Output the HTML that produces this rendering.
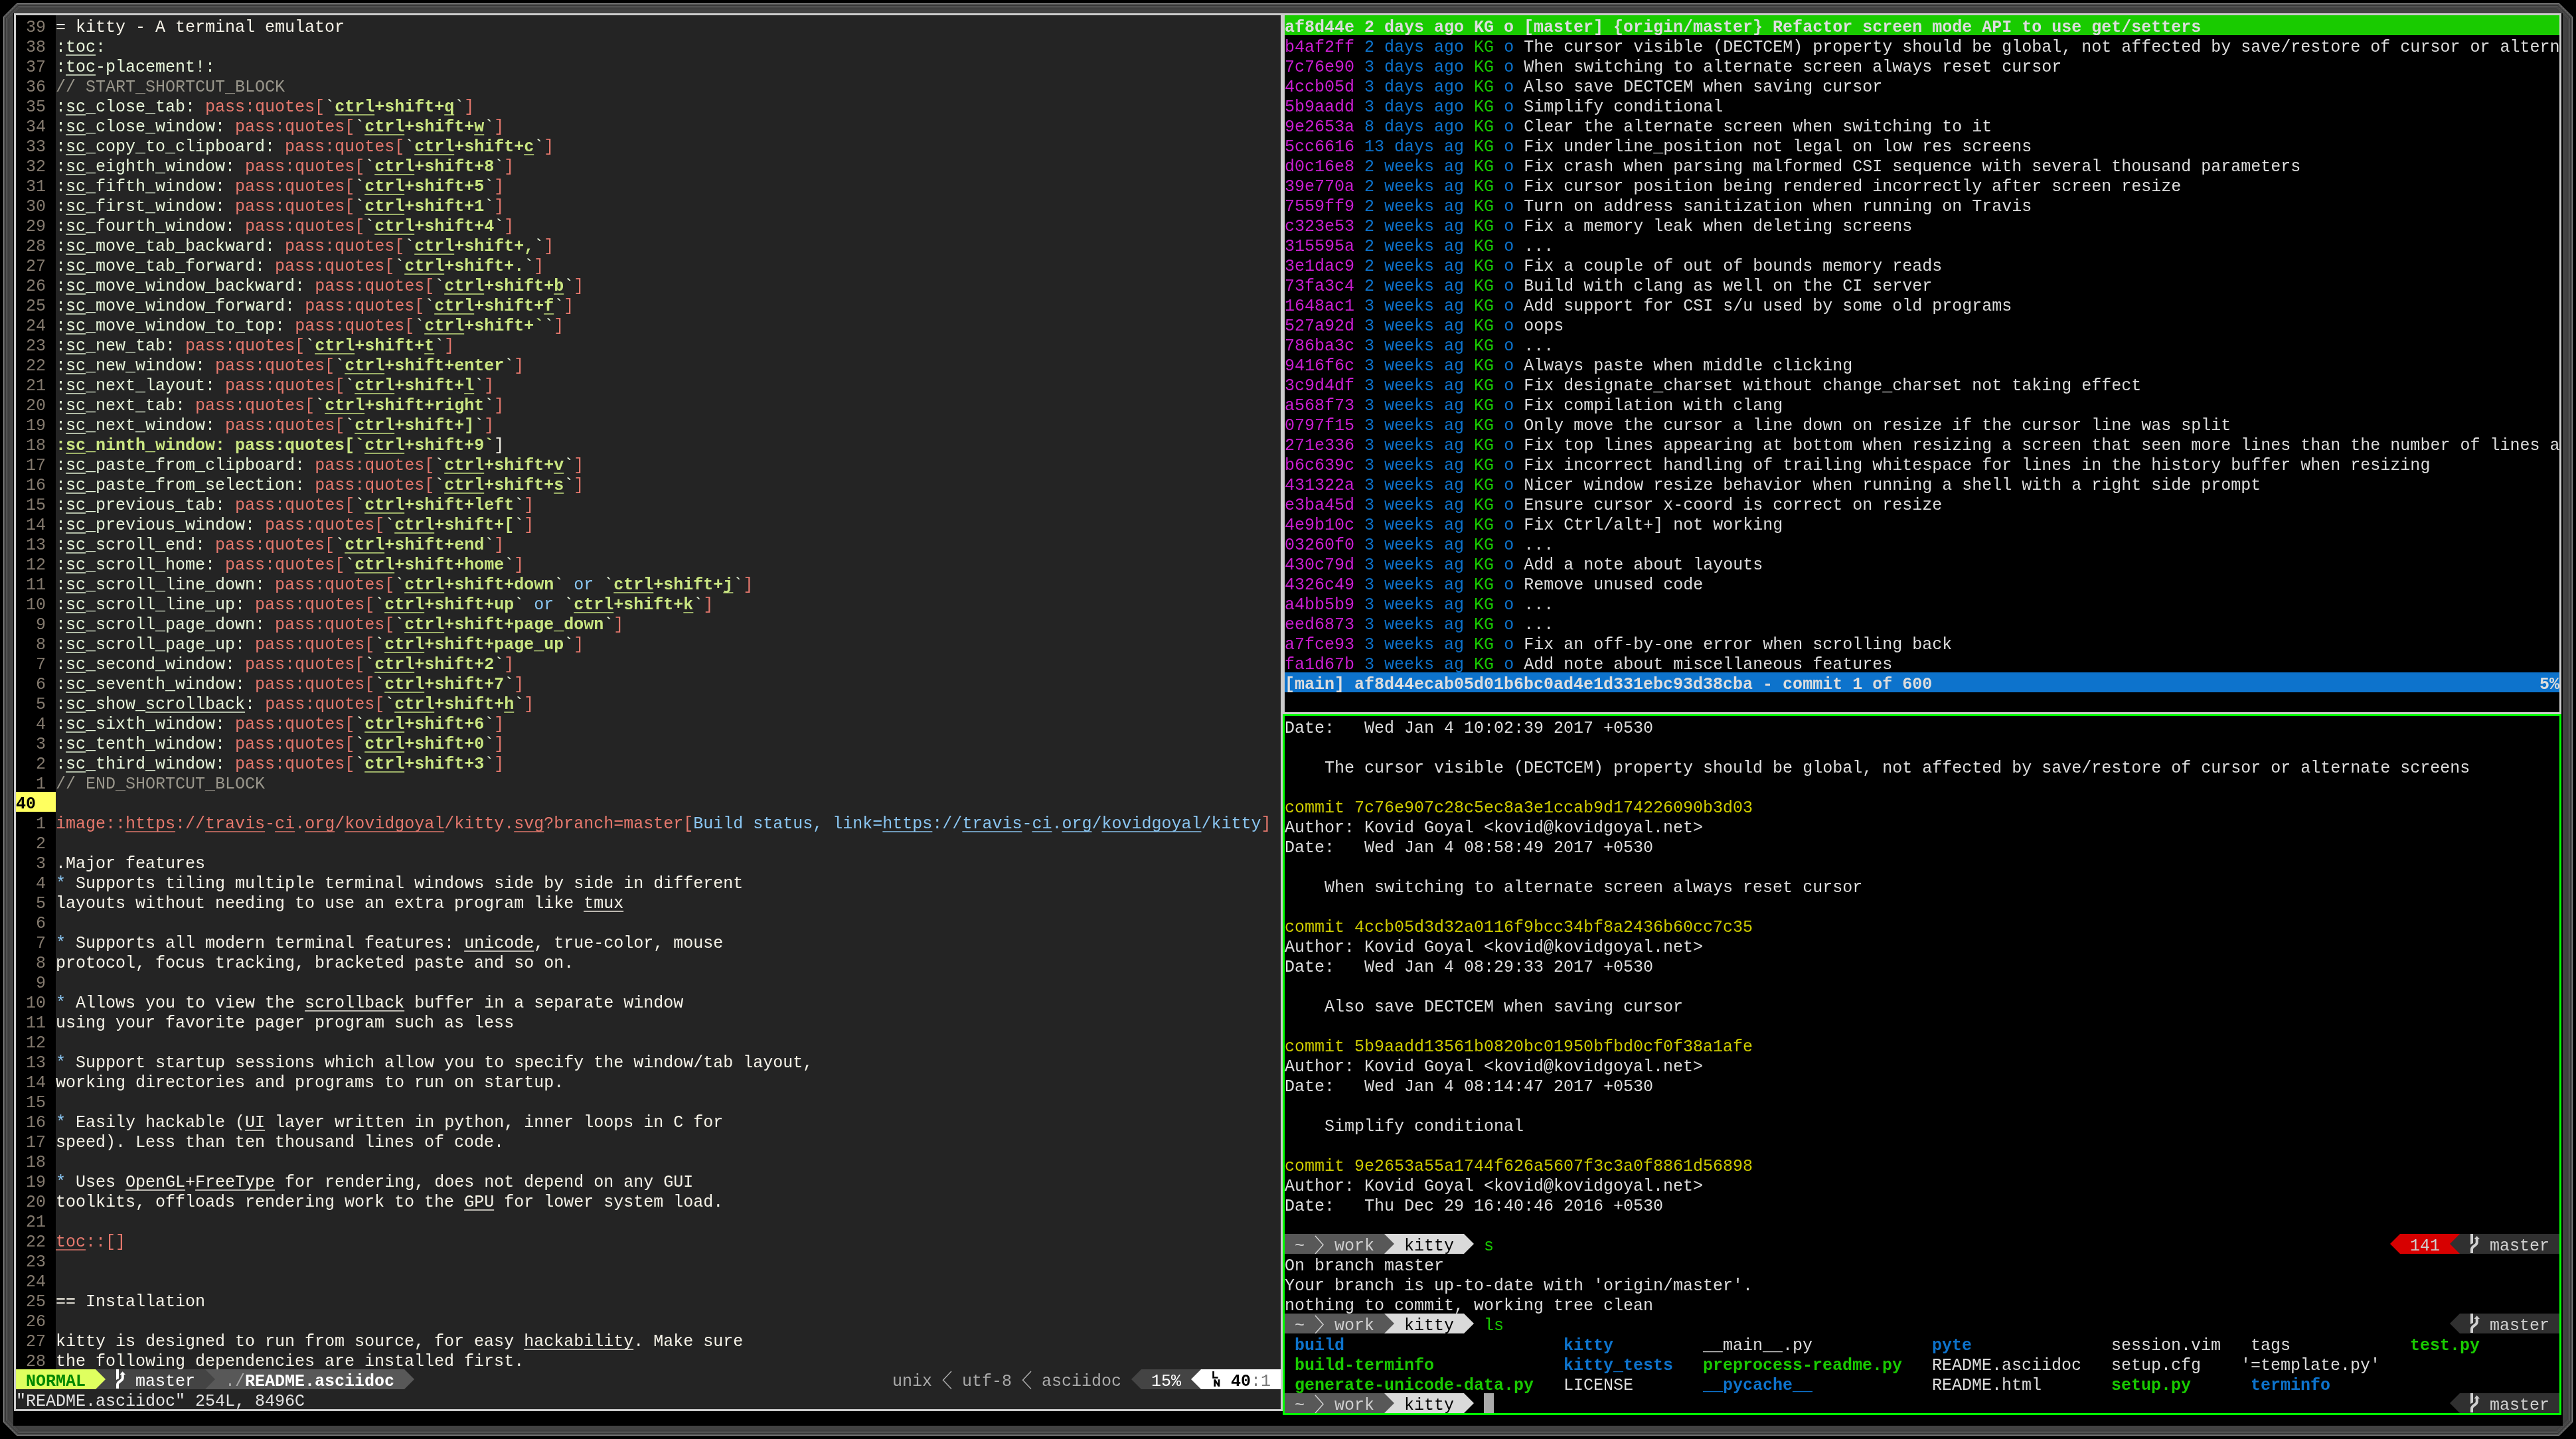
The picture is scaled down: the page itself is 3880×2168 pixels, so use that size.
<!DOCTYPE html><html><head><meta charset="utf-8"><style>
*{margin:0;padding:0}
html,body{width:3880px;height:2168px;overflow:hidden;background:#000}
body{position:relative;font-family:"Liberation Mono",monospace;font-size:25px;line-height:30px;white-space:pre;font-kerning:none;font-variant-ligatures:none}
.p{position:absolute;overflow:hidden;will-change:transform}
.r{position:absolute;left:0;height:30px;line-height:30px}
.t{position:absolute;left:0;height:30px;line-height:30px;top:4px}
.b{position:absolute;height:30px}
.g{position:absolute;top:0}
b{font-weight:bold}
u{text-decoration:underline;text-decoration-thickness:2px;text-underline-offset:4px;text-decoration-color:color-mix(in srgb,currentColor 72%,transparent);text-decoration-skip-ink:none}
</style></head><body><svg style="position:absolute;left:0;top:0" width="3880" height="2168" viewBox="0 0 3880 2168"><path fill-rule="evenodd" fill="#424242" d="M25.0,5 H3855.0 L3875,25.0 V2143.0 L3855.0,2163 H25.0 L5,2143.0 V25.0 Z M20,20 V2148 H3860 V20 Z"/><path fill="none" stroke="#888888" stroke-width="1" d="M25.29,5.5 H3854.71 L3874.5,25.29 V2142.71 L3854.71,2162.5 H25.29 L5.5,2142.71 V25.29 Z"/><path fill="none" stroke="#555555" stroke-width="2" d="M26.16,7 H3853.84 L3873,26.16 V2141.84 L3853.84,2161 H26.16 L7,2141.84 V26.16 Z"/><path fill="none" stroke="#333333" stroke-width="1" d="M27.03,8.5 H3852.97 L3871.5,27.03 V2140.97 L3852.97,2159.5 H27.03 L8.5,2140.97 V27.03 Z"/><path fill="none" stroke="#555555" stroke-width="1" d="M27.61,9.5 H3852.39 L3870.5,27.61 V2140.39 L3852.39,2158.5 H27.61 L9.5,2140.39 V27.61 Z"/><path fill="none" stroke="#474747" stroke-width="3" d="M28.77,11.5 H3851.23 L3868.5,28.77 V2139.23 L3851.23,2156.5 H28.77 L11.5,2139.23 V28.77 Z"/><path fill="none" stroke="#393939" stroke-width="1" d="M29.64,13 H3850.36 L3867,29.64 V2138.36 L3850.36,2155 H29.64 L13,2138.36 V29.64 Z"/><rect x="20" y="20" width="3840" height="2128" fill="#000"/></svg><div style="position:absolute;left:21px;top:20px;width:1911px;height:3px;background:#cccccc"></div><div style="position:absolute;left:21px;top:20px;width:3px;height:2106px;background:#cccccc"></div><div style="position:absolute;left:21px;top:2123px;width:1911px;height:3px;background:#cccccc"></div><div style="position:absolute;left:1929px;top:20px;width:3px;height:2106px;background:#cccccc"></div><div style="position:absolute;left:1932px;top:20px;width:1926px;height:3px;background:#cccccc"></div><div style="position:absolute;left:1932px;top:20px;width:3px;height:1056px;background:#cccccc"></div><div style="position:absolute;left:3855px;top:20px;width:3px;height:1056px;background:#cccccc"></div><div style="position:absolute;left:1932px;top:1073px;width:1926px;height:3px;background:#cccccc"></div><div style="position:absolute;left:1932px;top:1076px;width:1926px;height:3px;background:#00ff00"></div><div style="position:absolute;left:1932px;top:1076px;width:3px;height:1056px;background:#00ff00"></div><div style="position:absolute;left:3855px;top:1076px;width:3px;height:1056px;background:#00ff00"></div><div style="position:absolute;left:1932px;top:2129px;width:1926px;height:3px;background:#00ff00"></div><div class="p" style="left:24px;top:23px;width:1905px;height:2100px;background:#242424;color:#f6f3e8"><div class="b" style="left:0px;top:0px;width:60px;height:2040px;background:#000"></div><div class="t" style="top:4px;left:0px"><span style="color:#857b6f"> 39 </span><span style="color:#f6f3e8">= kitty - A terminal emulator</span></div><div class="t" style="top:34px;left:0px"><span style="color:#857b6f"> 38 </span><span style="color:#e7f6da">:</span><span style="color:#e7f6da"><u>toc</u></span><span style="color:#e7f6da">:</span></div><div class="t" style="top:64px;left:0px"><span style="color:#857b6f"> 37 </span><span style="color:#e7f6da">:</span><span style="color:#e7f6da"><u>toc</u></span><span style="color:#e7f6da">-placement!:</span></div><div class="t" style="top:94px;left:0px"><span style="color:#857b6f"> 36 </span><span style="color:#99968b">// START_SHORTCUT_BLOCK</span></div><div class="t" style="top:124px;left:0px"><span style="color:#857b6f"> 35 </span><span style="color:#e7f6da">:</span><span style="color:#e7f6da"><u>sc</u></span><span style="color:#e7f6da">_close_tab:</span><span style="color:#f6f3e8"> </span><span style="color:#e5786d">pass:quotes[</span><span style="color:#e7f6da">`</span><span style="color:#cae682"><b><u>ctrl</u></b></span><span style="color:#cae682"><b>+shift+</b></span><span style="color:#cae682"><b><u>q</u></b></span><span style="color:#e7f6da">`</span><span style="color:#e5786d">]</span></div><div class="t" style="top:154px;left:0px"><span style="color:#857b6f"> 34 </span><span style="color:#e7f6da">:</span><span style="color:#e7f6da"><u>sc</u></span><span style="color:#e7f6da">_close_window:</span><span style="color:#f6f3e8"> </span><span style="color:#e5786d">pass:quotes[</span><span style="color:#e7f6da">`</span><span style="color:#cae682"><b><u>ctrl</u></b></span><span style="color:#cae682"><b>+shift+</b></span><span style="color:#cae682"><b><u>w</u></b></span><span style="color:#e7f6da">`</span><span style="color:#e5786d">]</span></div><div class="t" style="top:184px;left:0px"><span style="color:#857b6f"> 33 </span><span style="color:#e7f6da">:</span><span style="color:#e7f6da"><u>sc</u></span><span style="color:#e7f6da">_copy_to_clipboard:</span><span style="color:#f6f3e8"> </span><span style="color:#e5786d">pass:quotes[</span><span style="color:#e7f6da">`</span><span style="color:#cae682"><b><u>ctrl</u></b></span><span style="color:#cae682"><b>+shift+</b></span><span style="color:#cae682"><b><u>c</u></b></span><span style="color:#e7f6da">`</span><span style="color:#e5786d">]</span></div><div class="t" style="top:214px;left:0px"><span style="color:#857b6f"> 32 </span><span style="color:#e7f6da">:</span><span style="color:#e7f6da"><u>sc</u></span><span style="color:#e7f6da">_eighth_window:</span><span style="color:#f6f3e8"> </span><span style="color:#e5786d">pass:quotes[</span><span style="color:#e7f6da">`</span><span style="color:#cae682"><b><u>ctrl</u></b></span><span style="color:#cae682"><b>+shift+</b></span><span style="color:#cae682"><b>8</b></span><span style="color:#e7f6da">`</span><span style="color:#e5786d">]</span></div><div class="t" style="top:244px;left:0px"><span style="color:#857b6f"> 31 </span><span style="color:#e7f6da">:</span><span style="color:#e7f6da"><u>sc</u></span><span style="color:#e7f6da">_fifth_window:</span><span style="color:#f6f3e8"> </span><span style="color:#e5786d">pass:quotes[</span><span style="color:#e7f6da">`</span><span style="color:#cae682"><b><u>ctrl</u></b></span><span style="color:#cae682"><b>+shift+</b></span><span style="color:#cae682"><b>5</b></span><span style="color:#e7f6da">`</span><span style="color:#e5786d">]</span></div><div class="t" style="top:274px;left:0px"><span style="color:#857b6f"> 30 </span><span style="color:#e7f6da">:</span><span style="color:#e7f6da"><u>sc</u></span><span style="color:#e7f6da">_first_window:</span><span style="color:#f6f3e8"> </span><span style="color:#e5786d">pass:quotes[</span><span style="color:#e7f6da">`</span><span style="color:#cae682"><b><u>ctrl</u></b></span><span style="color:#cae682"><b>+shift+</b></span><span style="color:#cae682"><b>1</b></span><span style="color:#e7f6da">`</span><span style="color:#e5786d">]</span></div><div class="t" style="top:304px;left:0px"><span style="color:#857b6f"> 29 </span><span style="color:#e7f6da">:</span><span style="color:#e7f6da"><u>sc</u></span><span style="color:#e7f6da">_fourth_window:</span><span style="color:#f6f3e8"> </span><span style="color:#e5786d">pass:quotes[</span><span style="color:#e7f6da">`</span><span style="color:#cae682"><b><u>ctrl</u></b></span><span style="color:#cae682"><b>+shift+</b></span><span style="color:#cae682"><b>4</b></span><span style="color:#e7f6da">`</span><span style="color:#e5786d">]</span></div><div class="t" style="top:334px;left:0px"><span style="color:#857b6f"> 28 </span><span style="color:#e7f6da">:</span><span style="color:#e7f6da"><u>sc</u></span><span style="color:#e7f6da">_move_tab_backward:</span><span style="color:#f6f3e8"> </span><span style="color:#e5786d">pass:quotes[</span><span style="color:#e7f6da">`</span><span style="color:#cae682"><b><u>ctrl</u></b></span><span style="color:#cae682"><b>+shift+</b></span><span style="color:#cae682"><b>,</b></span><span style="color:#e7f6da">`</span><span style="color:#e5786d">]</span></div><div class="t" style="top:364px;left:0px"><span style="color:#857b6f"> 27 </span><span style="color:#e7f6da">:</span><span style="color:#e7f6da"><u>sc</u></span><span style="color:#e7f6da">_move_tab_forward:</span><span style="color:#f6f3e8"> </span><span style="color:#e5786d">pass:quotes[</span><span style="color:#e7f6da">`</span><span style="color:#cae682"><b><u>ctrl</u></b></span><span style="color:#cae682"><b>+shift+</b></span><span style="color:#cae682"><b>.</b></span><span style="color:#e7f6da">`</span><span style="color:#e5786d">]</span></div><div class="t" style="top:394px;left:0px"><span style="color:#857b6f"> 26 </span><span style="color:#e7f6da">:</span><span style="color:#e7f6da"><u>sc</u></span><span style="color:#e7f6da">_move_window_backward:</span><span style="color:#f6f3e8"> </span><span style="color:#e5786d">pass:quotes[</span><span style="color:#e7f6da">`</span><span style="color:#cae682"><b><u>ctrl</u></b></span><span style="color:#cae682"><b>+shift+</b></span><span style="color:#cae682"><b><u>b</u></b></span><span style="color:#e7f6da">`</span><span style="color:#e5786d">]</span></div><div class="t" style="top:424px;left:0px"><span style="color:#857b6f"> 25 </span><span style="color:#e7f6da">:</span><span style="color:#e7f6da"><u>sc</u></span><span style="color:#e7f6da">_move_window_forward:</span><span style="color:#f6f3e8"> </span><span style="color:#e5786d">pass:quotes[</span><span style="color:#e7f6da">`</span><span style="color:#cae682"><b><u>ctrl</u></b></span><span style="color:#cae682"><b>+shift+</b></span><span style="color:#cae682"><b><u>f</u></b></span><span style="color:#e7f6da">`</span><span style="color:#e5786d">]</span></div><div class="t" style="top:454px;left:0px"><span style="color:#857b6f"> 24 </span><span style="color:#e7f6da">:</span><span style="color:#e7f6da"><u>sc</u></span><span style="color:#e7f6da">_move_window_to_top:</span><span style="color:#f6f3e8"> </span><span style="color:#e5786d">pass:quotes[</span><span style="color:#e7f6da">`</span><span style="color:#cae682"><b><u>ctrl</u></b></span><span style="color:#cae682"><b>+shift+</b></span><span style="color:#cae682"><b>`</b></span><span style="color:#e7f6da">`</span><span style="color:#e5786d">]</span></div><div class="t" style="top:484px;left:0px"><span style="color:#857b6f"> 23 </span><span style="color:#e7f6da">:</span><span style="color:#e7f6da"><u>sc</u></span><span style="color:#e7f6da">_new_tab:</span><span style="color:#f6f3e8"> </span><span style="color:#e5786d">pass:quotes[</span><span style="color:#e7f6da">`</span><span style="color:#cae682"><b><u>ctrl</u></b></span><span style="color:#cae682"><b>+shift+</b></span><span style="color:#cae682"><b><u>t</u></b></span><span style="color:#e7f6da">`</span><span style="color:#e5786d">]</span></div><div class="t" style="top:514px;left:0px"><span style="color:#857b6f"> 22 </span><span style="color:#e7f6da">:</span><span style="color:#e7f6da"><u>sc</u></span><span style="color:#e7f6da">_new_window:</span><span style="color:#f6f3e8"> </span><span style="color:#e5786d">pass:quotes[</span><span style="color:#e7f6da">`</span><span style="color:#cae682"><b><u>ctrl</u></b></span><span style="color:#cae682"><b>+shift+</b></span><span style="color:#cae682"><b>enter</b></span><span style="color:#e7f6da">`</span><span style="color:#e5786d">]</span></div><div class="t" style="top:544px;left:0px"><span style="color:#857b6f"> 21 </span><span style="color:#e7f6da">:</span><span style="color:#e7f6da"><u>sc</u></span><span style="color:#e7f6da">_next_layout:</span><span style="color:#f6f3e8"> </span><span style="color:#e5786d">pass:quotes[</span><span style="color:#e7f6da">`</span><span style="color:#cae682"><b><u>ctrl</u></b></span><span style="color:#cae682"><b>+shift+</b></span><span style="color:#cae682"><b><u>l</u></b></span><span style="color:#e7f6da">`</span><span style="color:#e5786d">]</span></div><div class="t" style="top:574px;left:0px"><span style="color:#857b6f"> 20 </span><span style="color:#e7f6da">:</span><span style="color:#e7f6da"><u>sc</u></span><span style="color:#e7f6da">_next_tab:</span><span style="color:#f6f3e8"> </span><span style="color:#e5786d">pass:quotes[</span><span style="color:#e7f6da">`</span><span style="color:#cae682"><b><u>ctrl</u></b></span><span style="color:#cae682"><b>+shift+</b></span><span style="color:#cae682"><b>right</b></span><span style="color:#e7f6da">`</span><span style="color:#e5786d">]</span></div><div class="t" style="top:604px;left:0px"><span style="color:#857b6f"> 19 </span><span style="color:#e7f6da">:</span><span style="color:#e7f6da"><u>sc</u></span><span style="color:#e7f6da">_next_window:</span><span style="color:#f6f3e8"> </span><span style="color:#e5786d">pass:quotes[</span><span style="color:#e7f6da">`</span><span style="color:#cae682"><b><u>ctrl</u></b></span><span style="color:#cae682"><b>+shift+</b></span><span style="color:#cae682"><b>]</b></span><span style="color:#e7f6da">`</span><span style="color:#e5786d">]</span></div><div class="t" style="top:634px;left:0px"><span style="color:#857b6f"> 18 </span><span style="color:#cae682"><b>:</b></span><span style="color:#cae682"><b><u>sc</u></b></span><span style="color:#cae682"><b>_ninth_window: pass:quotes[</b></span><span style="color:#cae682"><b>`</b></span><span style="color:#cae682"><b><u>ctrl</u></b></span><span style="color:#cae682"><b>+shift+9</b></span><span style="color:#cae682"><b>`</b></span><span style="color:#f6f3e8">]</span></div><div class="t" style="top:664px;left:0px"><span style="color:#857b6f"> 17 </span><span style="color:#e7f6da">:</span><span style="color:#e7f6da"><u>sc</u></span><span style="color:#e7f6da">_paste_from_clipboard:</span><span style="color:#f6f3e8"> </span><span style="color:#e5786d">pass:quotes[</span><span style="color:#e7f6da">`</span><span style="color:#cae682"><b><u>ctrl</u></b></span><span style="color:#cae682"><b>+shift+</b></span><span style="color:#cae682"><b><u>v</u></b></span><span style="color:#e7f6da">`</span><span style="color:#e5786d">]</span></div><div class="t" style="top:694px;left:0px"><span style="color:#857b6f"> 16 </span><span style="color:#e7f6da">:</span><span style="color:#e7f6da"><u>sc</u></span><span style="color:#e7f6da">_paste_from_selection:</span><span style="color:#f6f3e8"> </span><span style="color:#e5786d">pass:quotes[</span><span style="color:#e7f6da">`</span><span style="color:#cae682"><b><u>ctrl</u></b></span><span style="color:#cae682"><b>+shift+</b></span><span style="color:#cae682"><b><u>s</u></b></span><span style="color:#e7f6da">`</span><span style="color:#e5786d">]</span></div><div class="t" style="top:724px;left:0px"><span style="color:#857b6f"> 15 </span><span style="color:#e7f6da">:</span><span style="color:#e7f6da"><u>sc</u></span><span style="color:#e7f6da">_previous_tab:</span><span style="color:#f6f3e8"> </span><span style="color:#e5786d">pass:quotes[</span><span style="color:#e7f6da">`</span><span style="color:#cae682"><b><u>ctrl</u></b></span><span style="color:#cae682"><b>+shift+</b></span><span style="color:#cae682"><b>left</b></span><span style="color:#e7f6da">`</span><span style="color:#e5786d">]</span></div><div class="t" style="top:754px;left:0px"><span style="color:#857b6f"> 14 </span><span style="color:#e7f6da">:</span><span style="color:#e7f6da"><u>sc</u></span><span style="color:#e7f6da">_previous_window:</span><span style="color:#f6f3e8"> </span><span style="color:#e5786d">pass:quotes[</span><span style="color:#e7f6da">`</span><span style="color:#cae682"><b><u>ctrl</u></b></span><span style="color:#cae682"><b>+shift+</b></span><span style="color:#cae682"><b>[</b></span><span style="color:#e7f6da">`</span><span style="color:#e5786d">]</span></div><div class="t" style="top:784px;left:0px"><span style="color:#857b6f"> 13 </span><span style="color:#e7f6da">:</span><span style="color:#e7f6da"><u>sc</u></span><span style="color:#e7f6da">_scroll_end:</span><span style="color:#f6f3e8"> </span><span style="color:#e5786d">pass:quotes[</span><span style="color:#e7f6da">`</span><span style="color:#cae682"><b><u>ctrl</u></b></span><span style="color:#cae682"><b>+shift+</b></span><span style="color:#cae682"><b>end</b></span><span style="color:#e7f6da">`</span><span style="color:#e5786d">]</span></div><div class="t" style="top:814px;left:0px"><span style="color:#857b6f"> 12 </span><span style="color:#e7f6da">:</span><span style="color:#e7f6da"><u>sc</u></span><span style="color:#e7f6da">_scroll_home:</span><span style="color:#f6f3e8"> </span><span style="color:#e5786d">pass:quotes[</span><span style="color:#e7f6da">`</span><span style="color:#cae682"><b><u>ctrl</u></b></span><span style="color:#cae682"><b>+shift+</b></span><span style="color:#cae682"><b>home</b></span><span style="color:#e7f6da">`</span><span style="color:#e5786d">]</span></div><div class="t" style="top:844px;left:0px"><span style="color:#857b6f"> 11 </span><span style="color:#e7f6da">:</span><span style="color:#e7f6da"><u>sc</u></span><span style="color:#e7f6da">_scroll_line_down:</span><span style="color:#f6f3e8"> </span><span style="color:#e5786d">pass:quotes[</span><span style="color:#e7f6da">`</span><span style="color:#cae682"><b><u>ctrl</u></b></span><span style="color:#cae682"><b>+shift+</b></span><span style="color:#cae682"><b>down</b></span><span style="color:#e7f6da">`</span><span style="color:#f6f3e8"> </span><span style="color:#8ac6f2">or</span><span style="color:#f6f3e8"> </span><span style="color:#e7f6da">`</span><span style="color:#cae682"><b><u>ctrl</u></b></span><span style="color:#cae682"><b>+shift+</b></span><span style="color:#cae682"><b><u>j</u></b></span><span style="color:#e7f6da">`</span><span style="color:#e5786d">]</span></div><div class="t" style="top:874px;left:0px"><span style="color:#857b6f"> 10 </span><span style="color:#e7f6da">:</span><span style="color:#e7f6da"><u>sc</u></span><span style="color:#e7f6da">_scroll_line_up:</span><span style="color:#f6f3e8"> </span><span style="color:#e5786d">pass:quotes[</span><span style="color:#e7f6da">`</span><span style="color:#cae682"><b><u>ctrl</u></b></span><span style="color:#cae682"><b>+shift+</b></span><span style="color:#cae682"><b>up</b></span><span style="color:#e7f6da">`</span><span style="color:#f6f3e8"> </span><span style="color:#8ac6f2">or</span><span style="color:#f6f3e8"> </span><span style="color:#e7f6da">`</span><span style="color:#cae682"><b><u>ctrl</u></b></span><span style="color:#cae682"><b>+shift+</b></span><span style="color:#cae682"><b><u>k</u></b></span><span style="color:#e7f6da">`</span><span style="color:#e5786d">]</span></div><div class="t" style="top:904px;left:0px"><span style="color:#857b6f">  9 </span><span style="color:#e7f6da">:</span><span style="color:#e7f6da"><u>sc</u></span><span style="color:#e7f6da">_scroll_page_down:</span><span style="color:#f6f3e8"> </span><span style="color:#e5786d">pass:quotes[</span><span style="color:#e7f6da">`</span><span style="color:#cae682"><b><u>ctrl</u></b></span><span style="color:#cae682"><b>+shift+</b></span><span style="color:#cae682"><b>page_down</b></span><span style="color:#e7f6da">`</span><span style="color:#e5786d">]</span></div><div class="t" style="top:934px;left:0px"><span style="color:#857b6f">  8 </span><span style="color:#e7f6da">:</span><span style="color:#e7f6da"><u>sc</u></span><span style="color:#e7f6da">_scroll_page_up:</span><span style="color:#f6f3e8"> </span><span style="color:#e5786d">pass:quotes[</span><span style="color:#e7f6da">`</span><span style="color:#cae682"><b><u>ctrl</u></b></span><span style="color:#cae682"><b>+shift+</b></span><span style="color:#cae682"><b>page_up</b></span><span style="color:#e7f6da">`</span><span style="color:#e5786d">]</span></div><div class="t" style="top:964px;left:0px"><span style="color:#857b6f">  7 </span><span style="color:#e7f6da">:</span><span style="color:#e7f6da"><u>sc</u></span><span style="color:#e7f6da">_second_window:</span><span style="color:#f6f3e8"> </span><span style="color:#e5786d">pass:quotes[</span><span style="color:#e7f6da">`</span><span style="color:#cae682"><b><u>ctrl</u></b></span><span style="color:#cae682"><b>+shift+</b></span><span style="color:#cae682"><b>2</b></span><span style="color:#e7f6da">`</span><span style="color:#e5786d">]</span></div><div class="t" style="top:994px;left:0px"><span style="color:#857b6f">  6 </span><span style="color:#e7f6da">:</span><span style="color:#e7f6da"><u>sc</u></span><span style="color:#e7f6da">_seventh_window:</span><span style="color:#f6f3e8"> </span><span style="color:#e5786d">pass:quotes[</span><span style="color:#e7f6da">`</span><span style="color:#cae682"><b><u>ctrl</u></b></span><span style="color:#cae682"><b>+shift+</b></span><span style="color:#cae682"><b>7</b></span><span style="color:#e7f6da">`</span><span style="color:#e5786d">]</span></div><div class="t" style="top:1024px;left:0px"><span style="color:#857b6f">  5 </span><span style="color:#e7f6da">:</span><span style="color:#e7f6da"><u>sc</u></span><span style="color:#e7f6da">_show_</span><span style="color:#e7f6da"><u>scrollback</u></span><span style="color:#e7f6da">:</span><span style="color:#f6f3e8"> </span><span style="color:#e5786d">pass:quotes[</span><span style="color:#e7f6da">`</span><span style="color:#cae682"><b><u>ctrl</u></b></span><span style="color:#cae682"><b>+shift+</b></span><span style="color:#cae682"><b><u>h</u></b></span><span style="color:#e7f6da">`</span><span style="color:#e5786d">]</span></div><div class="t" style="top:1054px;left:0px"><span style="color:#857b6f">  4 </span><span style="color:#e7f6da">:</span><span style="color:#e7f6da"><u>sc</u></span><span style="color:#e7f6da">_sixth_window:</span><span style="color:#f6f3e8"> </span><span style="color:#e5786d">pass:quotes[</span><span style="color:#e7f6da">`</span><span style="color:#cae682"><b><u>ctrl</u></b></span><span style="color:#cae682"><b>+shift+</b></span><span style="color:#cae682"><b>6</b></span><span style="color:#e7f6da">`</span><span style="color:#e5786d">]</span></div><div class="t" style="top:1084px;left:0px"><span style="color:#857b6f">  3 </span><span style="color:#e7f6da">:</span><span style="color:#e7f6da"><u>sc</u></span><span style="color:#e7f6da">_tenth_window:</span><span style="color:#f6f3e8"> </span><span style="color:#e5786d">pass:quotes[</span><span style="color:#e7f6da">`</span><span style="color:#cae682"><b><u>ctrl</u></b></span><span style="color:#cae682"><b>+shift+</b></span><span style="color:#cae682"><b>0</b></span><span style="color:#e7f6da">`</span><span style="color:#e5786d">]</span></div><div class="t" style="top:1114px;left:0px"><span style="color:#857b6f">  2 </span><span style="color:#e7f6da">:</span><span style="color:#e7f6da"><u>sc</u></span><span style="color:#e7f6da">_third_window:</span><span style="color:#f6f3e8"> </span><span style="color:#e5786d">pass:quotes[</span><span style="color:#e7f6da">`</span><span style="color:#cae682"><b><u>ctrl</u></b></span><span style="color:#cae682"><b>+shift+</b></span><span style="color:#cae682"><b>3</b></span><span style="color:#e7f6da">`</span><span style="color:#e5786d">]</span></div><div class="t" style="top:1144px;left:0px"><span style="color:#857b6f">  1 </span><span style="color:#99968b">// END_SHORTCUT_BLOCK</span></div><div class="b" style="left:0px;top:1170px;width:60px;height:30px;background:#ffff5f"></div><div class="t" style="top:1174px;left:0px"><span style="color:#000"><b>40</b></span></div><div class="t" style="top:1204px;left:0px"><span style="color:#857b6f">  1 </span><span style="color:#e5786d">image::</span><span style="color:#e5786d"><u>https</u></span><span style="color:#e5786d">://</span><span style="color:#e5786d"><u>travis</u></span><span style="color:#e5786d">-</span><span style="color:#e5786d"><u>ci</u></span><span style="color:#e5786d">.</span><span style="color:#e5786d"><u>org</u></span><span style="color:#e5786d">/</span><span style="color:#e5786d"><u>kovidgoyal</u></span><span style="color:#e5786d">/kitty.</span><span style="color:#e5786d"><u>svg</u></span><span style="color:#e5786d">?branch=master[</span><span style="color:#8ac6f2">Build status, link=</span><span style="color:#8ac6f2"><u>https</u></span><span style="color:#8ac6f2">://</span><span style="color:#8ac6f2"><u>travis</u></span><span style="color:#8ac6f2">-</span><span style="color:#8ac6f2"><u>ci</u></span><span style="color:#8ac6f2">.</span><span style="color:#8ac6f2"><u>org</u></span><span style="color:#8ac6f2">/</span><span style="color:#8ac6f2"><u>kovidgoyal</u></span><span style="color:#8ac6f2">/kitty</span><span style="color:#e5786d">]</span></div><div class="t" style="top:1234px;left:0px"><span style="color:#857b6f">  2 </span></div><div class="t" style="top:1264px;left:0px"><span style="color:#857b6f">  3 </span><span style="color:#f6f3e8">.Major features</span></div><div class="t" style="top:1294px;left:0px"><span style="color:#857b6f">  4 </span><span style="color:#8ac6f2">*</span><span style="color:#f6f3e8"> Supports tiling multiple terminal windows side by side in different</span></div><div class="t" style="top:1324px;left:0px"><span style="color:#857b6f">  5 </span><span style="color:#f6f3e8">layouts without needing to use an extra program like </span><span style="color:#f6f3e8"><u>tmux</u></span></div><div class="t" style="top:1354px;left:0px"><span style="color:#857b6f">  6 </span></div><div class="t" style="top:1384px;left:0px"><span style="color:#857b6f">  7 </span><span style="color:#8ac6f2">*</span><span style="color:#f6f3e8"> Supports all modern terminal features: </span><span style="color:#f6f3e8"><u>unicode</u></span><span style="color:#f6f3e8">, true-color, mouse</span></div><div class="t" style="top:1414px;left:0px"><span style="color:#857b6f">  8 </span><span style="color:#f6f3e8">protocol, focus tracking, bracketed paste and so on.</span></div><div class="t" style="top:1444px;left:0px"><span style="color:#857b6f">  9 </span></div><div class="t" style="top:1474px;left:0px"><span style="color:#857b6f"> 10 </span><span style="color:#8ac6f2">*</span><span style="color:#f6f3e8"> Allows you to view the </span><span style="color:#f6f3e8"><u>scrollback</u></span><span style="color:#f6f3e8"> buffer in a separate window</span></div><div class="t" style="top:1504px;left:0px"><span style="color:#857b6f"> 11 </span><span style="color:#f6f3e8">using your favorite pager program such as less</span></div><div class="t" style="top:1534px;left:0px"><span style="color:#857b6f"> 12 </span></div><div class="t" style="top:1564px;left:0px"><span style="color:#857b6f"> 13 </span><span style="color:#8ac6f2">*</span><span style="color:#f6f3e8"> Support startup sessions which allow you to specify the window/tab layout,</span></div><div class="t" style="top:1594px;left:0px"><span style="color:#857b6f"> 14 </span><span style="color:#f6f3e8">working directories and programs to run on startup.</span></div><div class="t" style="top:1624px;left:0px"><span style="color:#857b6f"> 15 </span></div><div class="t" style="top:1654px;left:0px"><span style="color:#857b6f"> 16 </span><span style="color:#8ac6f2">*</span><span style="color:#f6f3e8"> Easily hackable (</span><span style="color:#f6f3e8"><u>UI</u></span><span style="color:#f6f3e8"> layer written in python, inner loops in C for</span></div><div class="t" style="top:1684px;left:0px"><span style="color:#857b6f"> 17 </span><span style="color:#f6f3e8">speed). Less than ten thousand lines of code.</span></div><div class="t" style="top:1714px;left:0px"><span style="color:#857b6f"> 18 </span></div><div class="t" style="top:1744px;left:0px"><span style="color:#857b6f"> 19 </span><span style="color:#8ac6f2">*</span><span style="color:#f6f3e8"> Uses </span><span style="color:#f6f3e8"><u>OpenGL</u></span><span style="color:#f6f3e8">+</span><span style="color:#f6f3e8"><u>FreeType</u></span><span style="color:#f6f3e8"> for rendering, does not depend on any GUI</span></div><div class="t" style="top:1774px;left:0px"><span style="color:#857b6f"> 20 </span><span style="color:#f6f3e8">toolkits, offloads rendering work to the </span><span style="color:#f6f3e8"><u>GPU</u></span><span style="color:#f6f3e8"> for lower system load.</span></div><div class="t" style="top:1804px;left:0px"><span style="color:#857b6f"> 21 </span></div><div class="t" style="top:1834px;left:0px"><span style="color:#857b6f"> 22 </span><span style="color:#e5786d"><u>toc</u></span><span style="color:#e5786d">::[]</span></div><div class="t" style="top:1864px;left:0px"><span style="color:#857b6f"> 23 </span></div><div class="t" style="top:1894px;left:0px"><span style="color:#857b6f"> 24 </span></div><div class="t" style="top:1924px;left:0px"><span style="color:#857b6f"> 25 </span><span style="color:#f6f3e8">== Installation</span></div><div class="t" style="top:1954px;left:0px"><span style="color:#857b6f"> 26 </span></div><div class="t" style="top:1984px;left:0px"><span style="color:#857b6f"> 27 </span><span style="color:#f6f3e8">kitty is designed to run from source, for easy </span><span style="color:#f6f3e8"><u>hackability</u></span><span style="color:#f6f3e8">. Make sure</span></div><div class="t" style="top:2014px;left:0px"><span style="color:#857b6f"> 28 </span><span style="color:#f6f3e8">the following dependencies are installed first.</span></div><div class="b" style="left:0px;top:2040px;width:120px;height:30px;background:#dfff5f"></div><svg class="g" style="left:120px;top:2040px" width="15" height="30" viewBox="0 0 15 30"><rect width="15" height="30" fill="#444444"/><polygon points="0,0 15,15 0,30" fill="#dfff5f"/></svg><div class="b" style="left:135px;top:2040px;width:150px;height:30px;background:#444444"></div><svg class="g" style="left:285px;top:2040px" width="15" height="30" viewBox="0 0 15 30"><rect width="15" height="30" fill="#585858"/><polygon points="0,0 15,15 0,30" fill="#444444"/></svg><div class="b" style="left:300px;top:2040px;width:285px;height:30px;background:#585858"></div><svg class="g" style="left:585px;top:2040px" width="15" height="30" viewBox="0 0 15 30"><polygon points="0,0 15,15 0,30" fill="#585858"/></svg><div class="t" style="top:2044px;left:0px"><span style="color:#008700"><b> NORMAL </b></span></div><svg class="g" style="left:150px;top:2040px" width="15" height="30" viewBox="0 0 15 30"><path d="M1,0 H5 V14 L1,16 Z" fill="#ffffff"/><path d="M3,29 V23 C3,18 10.75,18 10.75,13 V7" fill="none" stroke="#ffffff" stroke-width="4"/><polygon points="6.5,8 10.6,3.3 15,8" fill="#ffffff"/></svg><div class="t" style="top:2044px;left:180px"><span style="color:#ffffff">master</span></div><div class="t" style="top:2044px;left:315px"><span style="color:#aaaaaa">./</span><span style="color:#ffffff"><b>README.asciidoc</b></span></div><div class="t" style="top:2044px;left:1320px"><span style="color:#aaaaaa">unix</span></div><svg class="g" style="left:1395px;top:2040px" width="15" height="30" viewBox="0 0 15 30"><polyline points="14,3 1.5,16.3 14,29.5" fill="none" stroke="#aaaaaa" stroke-width="1.5"/></svg><div class="t" style="top:2044px;left:1425px"><span style="color:#aaaaaa">utf-8</span></div><svg class="g" style="left:1515px;top:2040px" width="15" height="30" viewBox="0 0 15 30"><polyline points="14,3 1.5,16.3 14,29.5" fill="none" stroke="#aaaaaa" stroke-width="1.5"/></svg><div class="t" style="top:2044px;left:1545px"><span style="color:#aaaaaa">asciidoc</span></div><svg class="g" style="left:1680px;top:2040px" width="15" height="30" viewBox="0 0 15 30"><polygon points="15,0 0,15 15,30" fill="#444444"/></svg><div class="b" style="left:1695px;top:2040px;width:75px;height:30px;background:#444444"></div><svg class="g" style="left:1770px;top:2040px" width="15" height="30" viewBox="0 0 15 30"><rect width="15" height="30" fill="#444444"/><polygon points="15,0 0,15 15,30" fill="#ffffff"/></svg><div class="b" style="left:1785px;top:2040px;width:120px;height:30px;background:#ffffff"></div><div class="t" style="top:2044px;left:1710px"><span style="color:#ffffff">15%</span></div><svg class="g" style="left:1800px;top:2040px" width="15" height="30" viewBox="0 0 15 30"><path d="M2.2,3 H4.9 V11.2 H10.6 V13.8 H2.2 Z" fill="#000000"/><path d="M4.3,15.2 H7 L10.6,21.5 V15.2 H13.3 V26 H10.6 L7,19.7 V26 H4.3 Z" fill="#000000"/></svg><div class="t" style="top:2044px;left:1830px"><span style="color:#000000"><b>40</b></span><span style="color:#777777">:1</span></div><div class="t" style="top:2074px;left:0px"><span style="color:#e4e4e4">"README.asciidoc" 254L, 8496C</span></div></div><div class="p" style="left:1935px;top:23px;width:1920px;height:1050px;background:#000;color:#dddddd"><div class="b" style="left:0px;top:0px;width:1920px;height:30px;background:#19cb00"></div><div class="t" style="top:4px;left:0px"><span style="color:#dddddd"><b>af8d44e 2 days ago KG o [master] {origin/master} Refactor screen mode API to use get/setters</b></span></div><div class="t" style="top:34px;left:0px"><span style="color:#cb1ed1">b4af2ff</span><span style="color:#dddddd"> </span><span style="color:#0d73cc">2 days ago</span><span style="color:#dddddd"> </span><span style="color:#19cb00">KG</span><span style="color:#dddddd"> </span><span style="color:#0d73cc">o</span><span style="color:#dddddd"> </span><span style="color:#dddddd">The cursor visible (DECTCEM) property should be global, not affected by save/restore of cursor or altern</span></div><div class="t" style="top:64px;left:0px"><span style="color:#cb1ed1">7c76e90</span><span style="color:#dddddd"> </span><span style="color:#0d73cc">3 days ago</span><span style="color:#dddddd"> </span><span style="color:#19cb00">KG</span><span style="color:#dddddd"> </span><span style="color:#0d73cc">o</span><span style="color:#dddddd"> </span><span style="color:#dddddd">When switching to alternate screen always reset cursor</span></div><div class="t" style="top:94px;left:0px"><span style="color:#cb1ed1">4ccb05d</span><span style="color:#dddddd"> </span><span style="color:#0d73cc">3 days ago</span><span style="color:#dddddd"> </span><span style="color:#19cb00">KG</span><span style="color:#dddddd"> </span><span style="color:#0d73cc">o</span><span style="color:#dddddd"> </span><span style="color:#dddddd">Also save DECTCEM when saving cursor</span></div><div class="t" style="top:124px;left:0px"><span style="color:#cb1ed1">5b9aadd</span><span style="color:#dddddd"> </span><span style="color:#0d73cc">3 days ago</span><span style="color:#dddddd"> </span><span style="color:#19cb00">KG</span><span style="color:#dddddd"> </span><span style="color:#0d73cc">o</span><span style="color:#dddddd"> </span><span style="color:#dddddd">Simplify conditional</span></div><div class="t" style="top:154px;left:0px"><span style="color:#cb1ed1">9e2653a</span><span style="color:#dddddd"> </span><span style="color:#0d73cc">8 days ago</span><span style="color:#dddddd"> </span><span style="color:#19cb00">KG</span><span style="color:#dddddd"> </span><span style="color:#0d73cc">o</span><span style="color:#dddddd"> </span><span style="color:#dddddd">Clear the alternate screen when switching to it</span></div><div class="t" style="top:184px;left:0px"><span style="color:#cb1ed1">5cc6616</span><span style="color:#dddddd"> </span><span style="color:#0d73cc">13 days ag</span><span style="color:#dddddd"> </span><span style="color:#19cb00">KG</span><span style="color:#dddddd"> </span><span style="color:#0d73cc">o</span><span style="color:#dddddd"> </span><span style="color:#dddddd">Fix underline_position not legal on low res screens</span></div><div class="t" style="top:214px;left:0px"><span style="color:#cb1ed1">d0c16e8</span><span style="color:#dddddd"> </span><span style="color:#0d73cc">2 weeks ag</span><span style="color:#dddddd"> </span><span style="color:#19cb00">KG</span><span style="color:#dddddd"> </span><span style="color:#0d73cc">o</span><span style="color:#dddddd"> </span><span style="color:#dddddd">Fix crash when parsing malformed CSI sequence with several thousand parameters</span></div><div class="t" style="top:244px;left:0px"><span style="color:#cb1ed1">39e770a</span><span style="color:#dddddd"> </span><span style="color:#0d73cc">2 weeks ag</span><span style="color:#dddddd"> </span><span style="color:#19cb00">KG</span><span style="color:#dddddd"> </span><span style="color:#0d73cc">o</span><span style="color:#dddddd"> </span><span style="color:#dddddd">Fix cursor position being rendered incorrectly after screen resize</span></div><div class="t" style="top:274px;left:0px"><span style="color:#cb1ed1">7559ff9</span><span style="color:#dddddd"> </span><span style="color:#0d73cc">2 weeks ag</span><span style="color:#dddddd"> </span><span style="color:#19cb00">KG</span><span style="color:#dddddd"> </span><span style="color:#0d73cc">o</span><span style="color:#dddddd"> </span><span style="color:#dddddd">Turn on address sanitization when running on Travis</span></div><div class="t" style="top:304px;left:0px"><span style="color:#cb1ed1">c323e53</span><span style="color:#dddddd"> </span><span style="color:#0d73cc">2 weeks ag</span><span style="color:#dddddd"> </span><span style="color:#19cb00">KG</span><span style="color:#dddddd"> </span><span style="color:#0d73cc">o</span><span style="color:#dddddd"> </span><span style="color:#dddddd">Fix a memory leak when deleting screens</span></div><div class="t" style="top:334px;left:0px"><span style="color:#cb1ed1">315595a</span><span style="color:#dddddd"> </span><span style="color:#0d73cc">2 weeks ag</span><span style="color:#dddddd"> </span><span style="color:#19cb00">KG</span><span style="color:#dddddd"> </span><span style="color:#0d73cc">o</span><span style="color:#dddddd"> </span><span style="color:#dddddd">...</span></div><div class="t" style="top:364px;left:0px"><span style="color:#cb1ed1">3e1dac9</span><span style="color:#dddddd"> </span><span style="color:#0d73cc">2 weeks ag</span><span style="color:#dddddd"> </span><span style="color:#19cb00">KG</span><span style="color:#dddddd"> </span><span style="color:#0d73cc">o</span><span style="color:#dddddd"> </span><span style="color:#dddddd">Fix a couple of out of bounds memory reads</span></div><div class="t" style="top:394px;left:0px"><span style="color:#cb1ed1">73fa3c4</span><span style="color:#dddddd"> </span><span style="color:#0d73cc">2 weeks ag</span><span style="color:#dddddd"> </span><span style="color:#19cb00">KG</span><span style="color:#dddddd"> </span><span style="color:#0d73cc">o</span><span style="color:#dddddd"> </span><span style="color:#dddddd">Build with clang as well on the CI server</span></div><div class="t" style="top:424px;left:0px"><span style="color:#cb1ed1">1648ac1</span><span style="color:#dddddd"> </span><span style="color:#0d73cc">3 weeks ag</span><span style="color:#dddddd"> </span><span style="color:#19cb00">KG</span><span style="color:#dddddd"> </span><span style="color:#0d73cc">o</span><span style="color:#dddddd"> </span><span style="color:#dddddd">Add support for CSI s/u used by some old programs</span></div><div class="t" style="top:454px;left:0px"><span style="color:#cb1ed1">527a92d</span><span style="color:#dddddd"> </span><span style="color:#0d73cc">3 weeks ag</span><span style="color:#dddddd"> </span><span style="color:#19cb00">KG</span><span style="color:#dddddd"> </span><span style="color:#0d73cc">o</span><span style="color:#dddddd"> </span><span style="color:#dddddd">oops</span></div><div class="t" style="top:484px;left:0px"><span style="color:#cb1ed1">786ba3c</span><span style="color:#dddddd"> </span><span style="color:#0d73cc">3 weeks ag</span><span style="color:#dddddd"> </span><span style="color:#19cb00">KG</span><span style="color:#dddddd"> </span><span style="color:#0d73cc">o</span><span style="color:#dddddd"> </span><span style="color:#dddddd">...</span></div><div class="t" style="top:514px;left:0px"><span style="color:#cb1ed1">9416f6c</span><span style="color:#dddddd"> </span><span style="color:#0d73cc">3 weeks ag</span><span style="color:#dddddd"> </span><span style="color:#19cb00">KG</span><span style="color:#dddddd"> </span><span style="color:#0d73cc">o</span><span style="color:#dddddd"> </span><span style="color:#dddddd">Always paste when middle clicking</span></div><div class="t" style="top:544px;left:0px"><span style="color:#cb1ed1">3c9d4df</span><span style="color:#dddddd"> </span><span style="color:#0d73cc">3 weeks ag</span><span style="color:#dddddd"> </span><span style="color:#19cb00">KG</span><span style="color:#dddddd"> </span><span style="color:#0d73cc">o</span><span style="color:#dddddd"> </span><span style="color:#dddddd">Fix designate_charset without change_charset not taking effect</span></div><div class="t" style="top:574px;left:0px"><span style="color:#cb1ed1">a568f73</span><span style="color:#dddddd"> </span><span style="color:#0d73cc">3 weeks ag</span><span style="color:#dddddd"> </span><span style="color:#19cb00">KG</span><span style="color:#dddddd"> </span><span style="color:#0d73cc">o</span><span style="color:#dddddd"> </span><span style="color:#dddddd">Fix compilation with clang</span></div><div class="t" style="top:604px;left:0px"><span style="color:#cb1ed1">0797f15</span><span style="color:#dddddd"> </span><span style="color:#0d73cc">3 weeks ag</span><span style="color:#dddddd"> </span><span style="color:#19cb00">KG</span><span style="color:#dddddd"> </span><span style="color:#0d73cc">o</span><span style="color:#dddddd"> </span><span style="color:#dddddd">Only move the cursor a line down on resize if the cursor line was split</span></div><div class="t" style="top:634px;left:0px"><span style="color:#cb1ed1">271e336</span><span style="color:#dddddd"> </span><span style="color:#0d73cc">3 weeks ag</span><span style="color:#dddddd"> </span><span style="color:#19cb00">KG</span><span style="color:#dddddd"> </span><span style="color:#0d73cc">o</span><span style="color:#dddddd"> </span><span style="color:#dddddd">Fix top lines appearing at bottom when resizing a screen that seen more lines than the number of lines a</span></div><div class="t" style="top:664px;left:0px"><span style="color:#cb1ed1">b6c639c</span><span style="color:#dddddd"> </span><span style="color:#0d73cc">3 weeks ag</span><span style="color:#dddddd"> </span><span style="color:#19cb00">KG</span><span style="color:#dddddd"> </span><span style="color:#0d73cc">o</span><span style="color:#dddddd"> </span><span style="color:#dddddd">Fix incorrect handling of trailing whitespace for lines in the history buffer when resizing</span></div><div class="t" style="top:694px;left:0px"><span style="color:#cb1ed1">431322a</span><span style="color:#dddddd"> </span><span style="color:#0d73cc">3 weeks ag</span><span style="color:#dddddd"> </span><span style="color:#19cb00">KG</span><span style="color:#dddddd"> </span><span style="color:#0d73cc">o</span><span style="color:#dddddd"> </span><span style="color:#dddddd">Nicer window resize behavior when running a shell with a right side prompt</span></div><div class="t" style="top:724px;left:0px"><span style="color:#cb1ed1">e3ba45d</span><span style="color:#dddddd"> </span><span style="color:#0d73cc">3 weeks ag</span><span style="color:#dddddd"> </span><span style="color:#19cb00">KG</span><span style="color:#dddddd"> </span><span style="color:#0d73cc">o</span><span style="color:#dddddd"> </span><span style="color:#dddddd">Ensure cursor x-coord is correct on resize</span></div><div class="t" style="top:754px;left:0px"><span style="color:#cb1ed1">4e9b10c</span><span style="color:#dddddd"> </span><span style="color:#0d73cc">3 weeks ag</span><span style="color:#dddddd"> </span><span style="color:#19cb00">KG</span><span style="color:#dddddd"> </span><span style="color:#0d73cc">o</span><span style="color:#dddddd"> </span><span style="color:#dddddd">Fix Ctrl/alt+] not working</span></div><div class="t" style="top:784px;left:0px"><span style="color:#cb1ed1">03260f0</span><span style="color:#dddddd"> </span><span style="color:#0d73cc">3 weeks ag</span><span style="color:#dddddd"> </span><span style="color:#19cb00">KG</span><span style="color:#dddddd"> </span><span style="color:#0d73cc">o</span><span style="color:#dddddd"> </span><span style="color:#dddddd">...</span></div><div class="t" style="top:814px;left:0px"><span style="color:#cb1ed1">430c79d</span><span style="color:#dddddd"> </span><span style="color:#0d73cc">3 weeks ag</span><span style="color:#dddddd"> </span><span style="color:#19cb00">KG</span><span style="color:#dddddd"> </span><span style="color:#0d73cc">o</span><span style="color:#dddddd"> </span><span style="color:#dddddd">Add a note about layouts</span></div><div class="t" style="top:844px;left:0px"><span style="color:#cb1ed1">4326c49</span><span style="color:#dddddd"> </span><span style="color:#0d73cc">3 weeks ag</span><span style="color:#dddddd"> </span><span style="color:#19cb00">KG</span><span style="color:#dddddd"> </span><span style="color:#0d73cc">o</span><span style="color:#dddddd"> </span><span style="color:#dddddd">Remove unused code</span></div><div class="t" style="top:874px;left:0px"><span style="color:#cb1ed1">a4bb5b9</span><span style="color:#dddddd"> </span><span style="color:#0d73cc">3 weeks ag</span><span style="color:#dddddd"> </span><span style="color:#19cb00">KG</span><span style="color:#dddddd"> </span><span style="color:#0d73cc">o</span><span style="color:#dddddd"> </span><span style="color:#dddddd">...</span></div><div class="t" style="top:904px;left:0px"><span style="color:#cb1ed1">eed6873</span><span style="color:#dddddd"> </span><span style="color:#0d73cc">3 weeks ag</span><span style="color:#dddddd"> </span><span style="color:#19cb00">KG</span><span style="color:#dddddd"> </span><span style="color:#0d73cc">o</span><span style="color:#dddddd"> </span><span style="color:#dddddd">...</span></div><div class="t" style="top:934px;left:0px"><span style="color:#cb1ed1">a7fce93</span><span style="color:#dddddd"> </span><span style="color:#0d73cc">3 weeks ag</span><span style="color:#dddddd"> </span><span style="color:#19cb00">KG</span><span style="color:#dddddd"> </span><span style="color:#0d73cc">o</span><span style="color:#dddddd"> </span><span style="color:#dddddd">Fix an off-by-one error when scrolling back</span></div><div class="t" style="top:964px;left:0px"><span style="color:#cb1ed1">fa1d67b</span><span style="color:#dddddd"> </span><span style="color:#0d73cc">3 weeks ag</span><span style="color:#dddddd"> </span><span style="color:#19cb00">KG</span><span style="color:#dddddd"> </span><span style="color:#0d73cc">o</span><span style="color:#dddddd"> </span><span style="color:#dddddd">Add note about miscellaneous features</span></div><div class="b" style="left:0px;top:990px;width:1920px;height:30px;background:#0d73cc"></div><div class="t" style="top:994px;left:0px"><span style="color:#dddddd"><b>[main] af8d44ecab05d01b6bc0ad4e1d331ebc93d38cba - commit 1 of 600</b></span></div><div class="t" style="top:994px;left:1890px"><span style="color:#dddddd"><b>5%</b></span></div></div><div class="p" style="left:1935px;top:1079px;width:1920px;height:1050px;background:#000;color:#dddddd"><div class="t" style="top:4px;left:0px"><span style="color:#dddddd">Date:   Wed Jan 4 10:02:39 2017 +0530</span></div><div class="t" style="top:64px;left:0px"><span style="color:#dddddd">    The cursor visible (DECTCEM) property should be global, not affected by save/restore of cursor or alternate screens</span></div><div class="t" style="top:124px;left:0px"><span style="color:#cecb00">commit 7c76e907c28c5ec8a3e1ccab9d174226090b3d03</span></div><div class="t" style="top:154px;left:0px"><span style="color:#dddddd">Author: Kovid Goyal &lt;kovid@kovidgoyal.net&gt;</span></div><div class="t" style="top:184px;left:0px"><span style="color:#dddddd">Date:   Wed Jan 4 08:58:49 2017 +0530</span></div><div class="t" style="top:244px;left:0px"><span style="color:#dddddd">    When switching to alternate screen always reset cursor</span></div><div class="t" style="top:304px;left:0px"><span style="color:#cecb00">commit 4ccb05d3d32a0116f9bcc34bf8a2436b60cc7c35</span></div><div class="t" style="top:334px;left:0px"><span style="color:#dddddd">Author: Kovid Goyal &lt;kovid@kovidgoyal.net&gt;</span></div><div class="t" style="top:364px;left:0px"><span style="color:#dddddd">Date:   Wed Jan 4 08:29:33 2017 +0530</span></div><div class="t" style="top:424px;left:0px"><span style="color:#dddddd">    Also save DECTCEM when saving cursor</span></div><div class="t" style="top:484px;left:0px"><span style="color:#cecb00">commit 5b9aadd13561b0820bc01950bfbd0cf0f38a1afe</span></div><div class="t" style="top:514px;left:0px"><span style="color:#dddddd">Author: Kovid Goyal &lt;kovid@kovidgoyal.net&gt;</span></div><div class="t" style="top:544px;left:0px"><span style="color:#dddddd">Date:   Wed Jan 4 08:14:47 2017 +0530</span></div><div class="t" style="top:604px;left:0px"><span style="color:#dddddd">    Simplify conditional</span></div><div class="t" style="top:664px;left:0px"><span style="color:#cecb00">commit 9e2653a55a1744f626a5607f3c3a0f8861d56898</span></div><div class="t" style="top:694px;left:0px"><span style="color:#dddddd">Author: Kovid Goyal &lt;kovid@kovidgoyal.net&gt;</span></div><div class="t" style="top:724px;left:0px"><span style="color:#dddddd">Date:   Thu Dec 29 16:40:46 2016 +0530</span></div><div class="t" style="top:814px;left:0px"><span style="color:#dddddd">On branch master</span></div><div class="t" style="top:844px;left:0px"><span style="color:#dddddd">Your branch is up-to-date with 'origin/master'.</span></div><div class="t" style="top:874px;left:0px"><span style="color:#dddddd">nothing to commit, working tree clean</span></div><div class="b" style="left:0px;top:780px;width:150px;height:30px;background:#585858"></div><div class="t" style="top:784px;left:0px"><span style="color:#d0d0d0"> ~</span></div><svg class="g" style="left:45px;top:780px" width="15" height="30" viewBox="0 0 15 30"><polyline points="1,3 13,16.5 1,30" fill="none" stroke="#d0d0d0" stroke-width="1.5"/></svg><div class="t" style="top:784px;left:75px"><span style="color:#d0d0d0">work</span></div><svg class="g" style="left:150px;top:780px" width="15" height="30" viewBox="0 0 15 30"><rect width="15" height="30" fill="#dadada"/><polygon points="0,0 15,15 0,30" fill="#585858"/></svg><div class="b" style="left:165px;top:780px;width:105px;height:30px;background:#dadada"></div><div class="t" style="top:784px;left:180px"><span style="color:#000000">kitty</span></div><svg class="g" style="left:270px;top:780px" width="15" height="30" viewBox="0 0 15 30"><polygon points="0,0 15,15 0,30" fill="#dadada"/></svg><div class="t" style="top:784px;left:300px"><span style="color:#19cb00">s</span></div><svg class="g" style="left:1665px;top:780px" width="15" height="30" viewBox="0 0 15 30"><polygon points="15,0 0,15 15,30" fill="#d70000"/></svg><div class="b" style="left:1680px;top:780px;width:75px;height:30px;background:#d70000"></div><div class="t" style="top:784px;left:1695px"><span style="color:#d0d0d0">141</span></div><svg class="g" style="left:1755px;top:780px" width="15" height="30" viewBox="0 0 15 30"><rect width="15" height="30" fill="#d70000"/><polygon points="15,0 0,15 15,30" fill="#303030"/></svg><div class="b" style="left:1770px;top:780px;width:150px;height:30px;background:#303030"></div><svg class="g" style="left:1785px;top:780px" width="15" height="30" viewBox="0 0 15 30"><path d="M1,0 H5 V14 L1,16 Z" fill="#d0d0d0"/><path d="M3,29 V23 C3,18 10.75,18 10.75,13 V7" fill="none" stroke="#d0d0d0" stroke-width="4"/><polygon points="6.5,8 10.6,3.3 15,8" fill="#d0d0d0"/></svg><div class="t" style="top:784px;left:1815px"><span style="color:#d0d0d0">master</span></div><div class="b" style="left:0px;top:900px;width:150px;height:30px;background:#585858"></div><div class="t" style="top:904px;left:0px"><span style="color:#d0d0d0"> ~</span></div><svg class="g" style="left:45px;top:900px" width="15" height="30" viewBox="0 0 15 30"><polyline points="1,3 13,16.5 1,30" fill="none" stroke="#d0d0d0" stroke-width="1.5"/></svg><div class="t" style="top:904px;left:75px"><span style="color:#d0d0d0">work</span></div><svg class="g" style="left:150px;top:900px" width="15" height="30" viewBox="0 0 15 30"><rect width="15" height="30" fill="#dadada"/><polygon points="0,0 15,15 0,30" fill="#585858"/></svg><div class="b" style="left:165px;top:900px;width:105px;height:30px;background:#dadada"></div><div class="t" style="top:904px;left:180px"><span style="color:#000000">kitty</span></div><svg class="g" style="left:270px;top:900px" width="15" height="30" viewBox="0 0 15 30"><polygon points="0,0 15,15 0,30" fill="#dadada"/></svg><div class="t" style="top:904px;left:300px"><span style="color:#19cb00">ls</span></div><svg class="g" style="left:1755px;top:900px" width="15" height="30" viewBox="0 0 15 30"><polygon points="15,0 0,15 15,30" fill="#303030"/></svg><div class="b" style="left:1770px;top:900px;width:150px;height:30px;background:#303030"></div><svg class="g" style="left:1785px;top:900px" width="15" height="30" viewBox="0 0 15 30"><path d="M1,0 H5 V14 L1,16 Z" fill="#d0d0d0"/><path d="M3,29 V23 C3,18 10.75,18 10.75,13 V7" fill="none" stroke="#d0d0d0" stroke-width="4"/><polygon points="6.5,8 10.6,3.3 15,8" fill="#d0d0d0"/></svg><div class="t" style="top:904px;left:1815px"><span style="color:#d0d0d0">master</span></div><div class="t" style="top:934px;left:15px"><span style="color:#0d73cc"><b>build</b></span></div><div class="t" style="top:934px;left:420px"><span style="color:#0d73cc"><b>kitty</b></span></div><div class="t" style="top:934px;left:630px"><span style="color:#dddddd">__main__.py</span></div><div class="t" style="top:934px;left:975px"><span style="color:#0d73cc"><b>pyte</b></span></div><div class="t" style="top:934px;left:1245px"><span style="color:#dddddd">session.vim</span></div><div class="t" style="top:934px;left:1455px"><span style="color:#dddddd">tags</span></div><div class="t" style="top:934px;left:1695px"><span style="color:#19cb00"><b>test.py</b></span></div><div class="t" style="top:964px;left:15px"><span style="color:#19cb00"><b>build-terminfo</b></span></div><div class="t" style="top:964px;left:420px"><span style="color:#0d73cc"><b>kitty_tests</b></span></div><div class="t" style="top:964px;left:630px"><span style="color:#19cb00"><b>preprocess-readme.py</b></span></div><div class="t" style="top:964px;left:975px"><span style="color:#dddddd">README.asciidoc</span></div><div class="t" style="top:964px;left:1245px"><span style="color:#dddddd">setup.cfg</span></div><div class="t" style="top:964px;left:1440px"><span style="color:#dddddd">'=template.py'</span></div><div class="t" style="top:994px;left:15px"><span style="color:#19cb00"><b>generate-unicode-data.py</b></span></div><div class="t" style="top:994px;left:420px"><span style="color:#dddddd">LICENSE</span></div><div class="t" style="top:994px;left:630px"><span style="color:#0d73cc"><b>__pycache__</b></span></div><div class="t" style="top:994px;left:975px"><span style="color:#dddddd">README.html</span></div><div class="t" style="top:994px;left:1245px"><span style="color:#19cb00"><b>setup.py</b></span></div><div class="t" style="top:994px;left:1455px"><span style="color:#0d73cc"><b>terminfo</b></span></div><div class="b" style="left:0px;top:1020px;width:150px;height:30px;background:#585858"></div><div class="t" style="top:1024px;left:0px"><span style="color:#d0d0d0"> ~</span></div><svg class="g" style="left:45px;top:1020px" width="15" height="30" viewBox="0 0 15 30"><polyline points="1,3 13,16.5 1,30" fill="none" stroke="#d0d0d0" stroke-width="1.5"/></svg><div class="t" style="top:1024px;left:75px"><span style="color:#d0d0d0">work</span></div><svg class="g" style="left:150px;top:1020px" width="15" height="30" viewBox="0 0 15 30"><rect width="15" height="30" fill="#dadada"/><polygon points="0,0 15,15 0,30" fill="#585858"/></svg><div class="b" style="left:165px;top:1020px;width:105px;height:30px;background:#dadada"></div><div class="t" style="top:1024px;left:180px"><span style="color:#000000">kitty</span></div><svg class="g" style="left:270px;top:1020px" width="15" height="30" viewBox="0 0 15 30"><polygon points="0,0 15,15 0,30" fill="#dadada"/></svg><svg class="g" style="left:1755px;top:1020px" width="15" height="30" viewBox="0 0 15 30"><polygon points="15,0 0,15 15,30" fill="#303030"/></svg><div class="b" style="left:1770px;top:1020px;width:150px;height:30px;background:#303030"></div><svg class="g" style="left:1785px;top:1020px" width="15" height="30" viewBox="0 0 15 30"><path d="M1,0 H5 V14 L1,16 Z" fill="#d0d0d0"/><path d="M3,29 V23 C3,18 10.75,18 10.75,13 V7" fill="none" stroke="#d0d0d0" stroke-width="4"/><polygon points="6.5,8 10.6,3.3 15,8" fill="#d0d0d0"/></svg><div class="t" style="top:1024px;left:1815px"><span style="color:#d0d0d0">master</span></div><div class="b" style="left:300px;top:1020px;width:15px;height:30px;background:#aaaaaa"></div></div></body></html>
